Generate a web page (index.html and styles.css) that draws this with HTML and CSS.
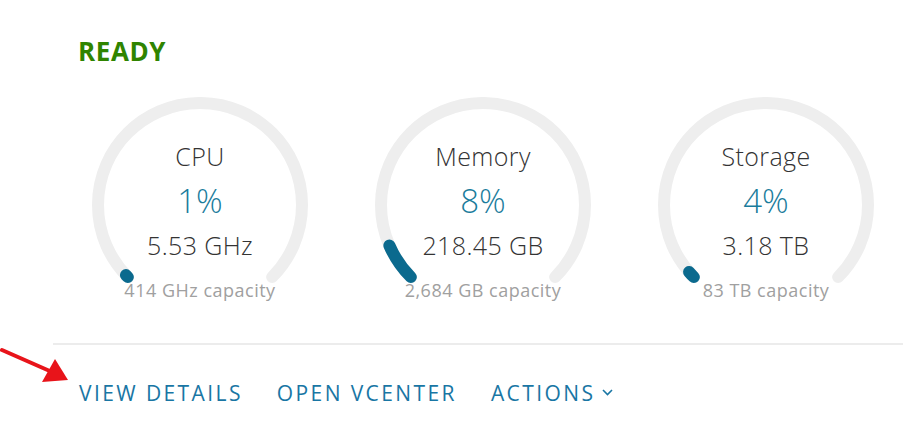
FILE: index.html
```html
<!DOCTYPE html>
<html lang="en">

<head>
    <meta charset="UTF-8">
    <meta name="viewport" content="width=device-width, initial-scale=1.0">
    <title>Cluster Capacity</title>
    <link rel="stylesheet" href="styles.css">
</head>

<body>
    <div class="panel">
        <div class="status">READY</div>

        <div class="gauges">
            <!-- CPU -->
            <div class="gauge">
                <svg class="gauge-ring" viewBox="0 0 216 216" width="216" height="216">
                    <path class="track" d="M35.88 180.12 A102 102 0 1 1 180.12 180.12" />
                    <path class="fill" pathLength="100" d="M35.88 180.12 A102 102 0 1 1 180.12 180.12" style="stroke-dasharray: 0.6 200;" />
                </svg>
                <div class="gauge-text">
                    <div class="gauge-label">CPU</div>
                    <div class="gauge-pct">1%</div>
                    <div class="gauge-used">5.53 GHz</div>
                    <div class="gauge-cap">414 GHz capacity</div>
                </div>
            </div>

            <!-- Memory -->
            <div class="gauge">
                <svg class="gauge-ring" viewBox="0 0 216 216" width="216" height="216">
                    <path class="track" d="M35.88 180.12 A102 102 0 1 1 180.12 180.12" />
                    <path class="fill" pathLength="100" d="M35.88 180.12 A102 102 0 1 1 180.12 180.12" style="stroke-dasharray: 8 200;" />
                </svg>
                <div class="gauge-text">
                    <div class="gauge-label">Memory</div>
                    <div class="gauge-pct">8%</div>
                    <div class="gauge-used">218.45 GB</div>
                    <div class="gauge-cap">2,684 GB capacity</div>
                </div>
            </div>

            <!-- Storage -->
            <div class="gauge">
                <svg class="gauge-ring" viewBox="0 0 216 216" width="216" height="216">
                    <path class="track" d="M35.88 180.12 A102 102 0 1 1 180.12 180.12" />
                    <path class="fill" pathLength="100" d="M35.88 180.12 A102 102 0 1 1 180.12 180.12" style="stroke-dasharray: 1.5 200;" />
                </svg>
                <div class="gauge-text">
                    <div class="gauge-label">Storage</div>
                    <div class="gauge-pct">4%</div>
                    <div class="gauge-used">3.18 TB</div>
                    <div class="gauge-cap">83 TB capacity</div>
                </div>
            </div>
        </div>

        <div class="divider"></div>

        <div class="actions">
            <a href="#" class="action-link">VIEW DETAILS</a>
            <a href="#" class="action-link">OPEN VCENTER</a>
            <a href="#" class="action-link">ACTIONS
                <svg class="chevron" viewBox="0 0 11 7" width="11" height="7">
                    <path d="M1 1 L5.5 5.5 L10 1" />
                </svg>
            </a>
        </div>
    </div>

    <!-- annotation arrow -->
    <svg class="pointer" viewBox="0 0 72 40" width="72" height="40">
        <line x1="2" y1="5" x2="52" y2="27" />
        <polygon points="68,35 42,37 55,14" />
    </svg>
</body>

</html>
```

FILE: styles.css
```css
body {
    margin: 0;
    font-family: "Open Sans", Arial, sans-serif;
    background-color: #ffffff;
    color: #333333;
}

.panel {
    margin-left: 53px;
    padding-top: 36px;
}

.status {
    padding-left: 25px;
    font-size: 26px;
    line-height: 30px;
    font-weight: 700;
    letter-spacing: 0.6px;
    color: #2f8400;
}

.gauges {
    display: flex;
    gap: 67px;
    padding-left: 39px;
    margin-top: 31px;
}

.gauge {
    display: grid;
    width: 216px;
    height: 216px;
}

.gauge > * {
    grid-area: 1 / 1;
}

.gauge-ring {
    display: block;
}

.track,
.fill {
    fill: none;
    stroke-width: 12;
    stroke-linecap: round;
}

.track {
    stroke: #eeeeee;
}

.fill {
    stroke: #0b6a8e;
}

.gauge-text {
    display: flex;
    flex-direction: column;
    align-items: center;
    padding-top: 37px;
    text-align: center;
}

.gauge-label,
.gauge-used {
    font-size: 25px;
    line-height: 45px;
    font-weight: 300;
    letter-spacing: 0.4px;
    color: #333333;
}

.gauge-pct {
    font-size: 33px;
    line-height: 44px;
    font-weight: 300;
    color: #1a7c9c;
}

.gauge-cap {
    font-size: 18px;
    line-height: 45px;
    letter-spacing: 0.5px;
    color: #a0a0a0;
}

.divider {
    margin-top: 30px;
    border-top: 2px solid #ececec;
}

.actions {
    display: flex;
    gap: 34px;
    padding-left: 26px;
    padding-top: 33px;
}

.action-link {
    display: flex;
    align-items: center;
    font-size: 21px;
    line-height: 30px;
    font-weight: 500;
    letter-spacing: 2.4px;
    color: #1976a4;
    text-decoration: none;
}

.chevron {
    margin-left: 7px;
    margin-top: -2px;
    fill: none;
    stroke: #1976a4;
    stroke-width: 1.6;
}

.pointer {
    position: absolute;
    left: 0;
    top: 345px;
}

.pointer line {
    stroke: #e8141a;
    stroke-width: 4;
    stroke-linecap: round;
}

.pointer polygon {
    fill: #e8141a;
}
```
